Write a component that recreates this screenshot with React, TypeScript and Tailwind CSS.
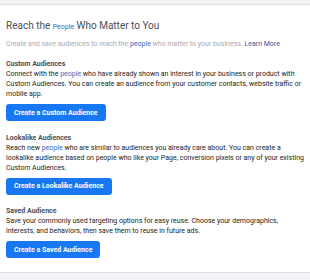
const sections = [
  {
    title: "Custom Audiences",
    body: (
      <>
        Connect with the <span className="text-[#4267b2]">people</span> who have already shown an interest in your business or product with Custom Audiences. You can create an audience from your customer contacts, website traffic or mobile app.
      </>
    ),
    button: "Create a Custom Audience",
  },
  {
    title: "Lookalike Audiences",
    body: (
      <>
        Reach new <span className="text-[#4267b2]">people</span> who are similar to audiences you already care about. You can create a lookalike audience based on people who like your Page, conversion pixels or any of your existing Custom Audiences.
      </>
    ),
    button: "Create a Lookalike Audience",
  },
  {
    title: "Saved Audience",
    body: (
      <>
        Save your commonly used targeting options for easy reuse. Choose your demographics, interests, and behaviors, then save them to reuse in future ads.
      </>
    ),
    button: "Create a Saved Audience",
  },
];

export default function App() {
  return (
    <div className="w-[310px] h-[280px] bg-[#f2f3f5] pt-[4px] font-['Roboto',sans-serif] overflow-hidden">
      <div className="bg-white border-y border-[#dddfe2] h-[269px] px-[6px] pt-[14px]">
        {/* Header */}
        <h1 className="text-[10px] leading-[14px] text-[#4b4f56]">
          Reach the <span className="text-[7px] text-[#4267b2]">People</span> Who Matter to You
        </h1>
        <p className="mt-[4.5px] text-[7px] leading-[10px] text-[#a7abb1]">
          Create and save audiences to reach the <span className="text-[#4267b2]">people</span> who matter to your business.{" "}
          <span className="text-[#365899]">Learn More</span>
        </p>

        <div className="mt-[10.5px] flex flex-col gap-[11.5px]">
          {sections.map((s) => (
            <section key={s.title} className="flex flex-col items-start">
              <h2 className="text-[7px] leading-[10px] font-bold text-[#4b4f56]">{s.title}</h2>
              <p className="text-[7px] leading-[10px] text-[#1c1e21]">{s.body}</p>
              <button className="mt-[5px] h-[17px] px-[8px] rounded-[3px] bg-[#1877f2] text-white text-[7px] leading-[10px] font-bold">
                {s.button}
              </button>
            </section>
          ))}
        </div>
      </div>
    </div>
  );
}
